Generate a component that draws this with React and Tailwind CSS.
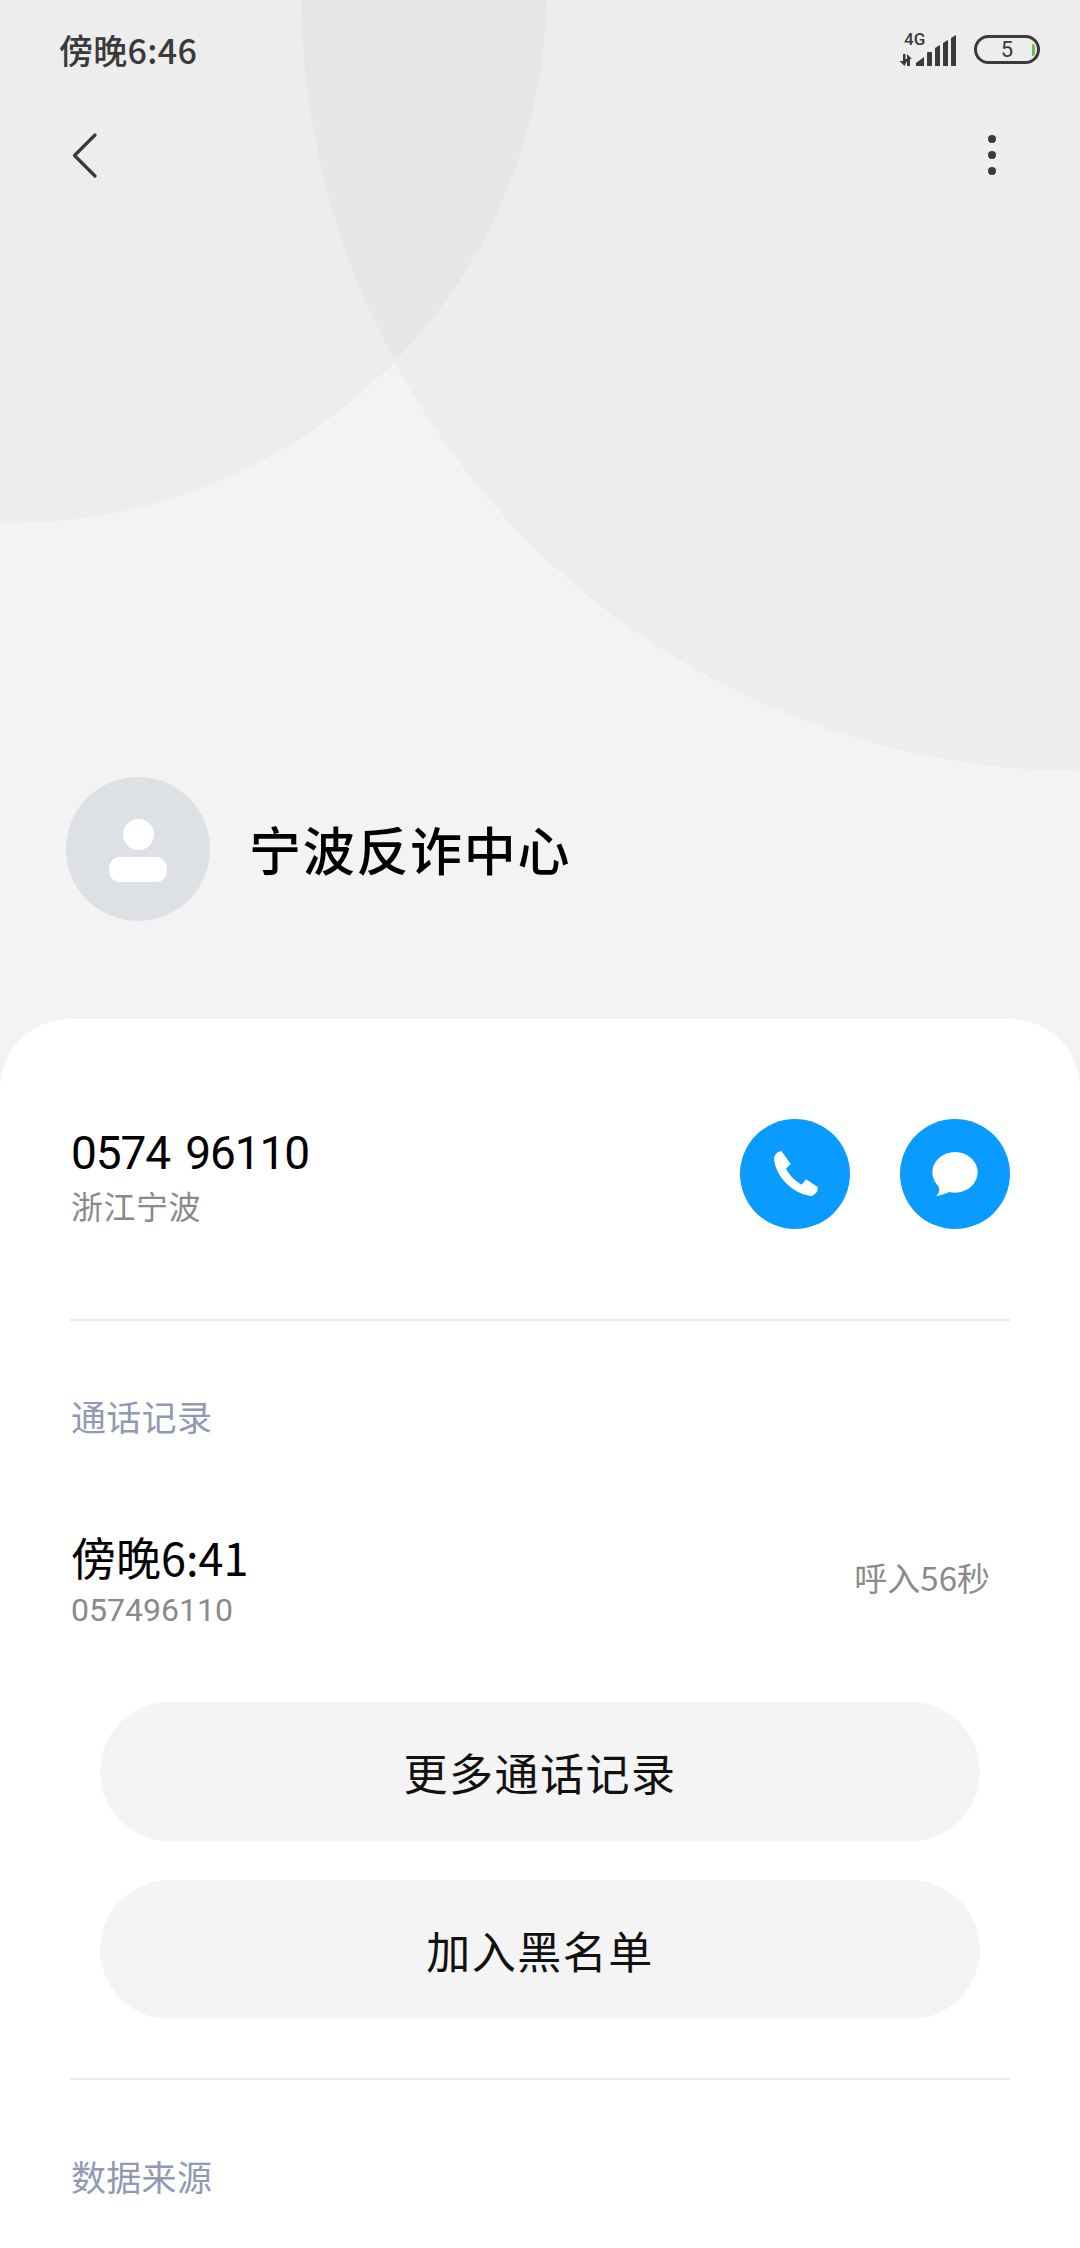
const cjk = { fontFamily: '"Noto Sans CJK SC", sans-serif' }
const roboto = { fontFamily: 'Roboto, sans-serif' }

function SignalIcon() {
  return (
    <svg width="58" height="32" viewBox="0 0 58 32" fill="#3a3a3a">
      {/* arrows */}
      <path d="M4 19h2.5v5H9l-3.5 7-5-5H4z" />
      <path d="M8 31v-12l5 5h-2v7z" />
      {/* bars */}
      <path d="M17 31v-3l8-6v9z" />
      <rect x="28" y="17" width="5" height="14" rx="1" />
      <path d="M36 13l5-3v21h-5z" />
      <path d="M44 8l5-3v26h-5z" />
      <path d="M52 3l5-3v31h-5z" />
    </svg>
  )
}

function BackIcon() {
  return (
    <svg width="26" height="45" viewBox="0 0 26 45" fill="none" stroke="#3a3a3a" strokeWidth="3.2" strokeLinecap="round" strokeLinejoin="round">
      <path d="M23 2L2.5 22.5L23 43" />
    </svg>
  )
}

function PhoneIcon() {
  return (
    <svg width="110" height="110" viewBox="120 87 330 330" fill="#fff">
      <path d="M222 205C224 192 235 183 245 184L272 222C265 228 262 232 258 236C270 258 285 272 305 284L318 268L352 290C358 298 345 318 332 318C280 312 225 260 222 205Z" />
    </svg>
  )
}

function MessageIcon() {
  return (
    <svg width="110" height="110" viewBox="600 87 330 330" fill="#fff">
      <ellipse cx="765" cy="247" rx="68" ry="61" />
      <path d="M715 285L718 302C716 310 712 315 708 318C725 316 740 310 755 303Z" />
    </svg>
  )
}

function Divider() {
  return <div className="h-[2px] bg-[#ececec]" />
}

function ActionButton({ label }) {
  return (
    <button className="mx-[30px] h-[139px] rounded-full bg-[#f4f4f4] text-[#111] text-[44px] leading-none tracking-[1.5px]">
      {label}
    </button>
  )
}

export default function App() {
  return (
    <div className="relative w-[1080px] h-[2248px] overflow-hidden bg-[#f3f3f3] flex flex-col" style={cjk}>
      {/* background circles */}
      <div className="absolute left-[-523px] top-[-547px] w-[1070px] h-[1070px] rounded-full bg-black/[0.022]" />
      <div className="absolute left-[301px] top-[-787px] w-[1558px] h-[1558px] rounded-full bg-black/[0.022]" />

      <div className="relative pt-[34px] pl-[59px] pr-[40px] h-[120px] flex justify-between items-start">
        <span className="text-[34px] leading-[32px] tracking-[0.3px] font-medium text-[#3a3a3a]">傍晚6:46</span>
        <div className="flex items-start gap-[17px] pt-[1px]">
          <div className="relative w-[58px] h-[30px]">
            <span className="absolute left-[5px] top-[-4px] text-[17px] leading-[17px] font-medium text-[#3a3a3a]" style={roboto}>4G</span>
            <div className="absolute left-0 top-0"><SignalIcon /></div>
          </div>
          <div className="relative w-[66px] h-[29px] rounded-full border-[3px] border-[#3a3a3a] flex items-center justify-center">
            <span className="text-[22px] leading-none text-[#3a3a3a]" style={roboto}>5</span>
            <div className="absolute right-[2px] top-[6px] w-[3px] h-[12px] bg-[#6cc04a] rounded-r-full" />
          </div>
        </div>
      </div>

      <div className="relative h-[70px] pl-[72px] pr-[84px] flex items-center justify-between">
        <BackIcon />
        <div className="flex flex-col gap-[8px]">
          <div className="w-[8px] h-[8px] rounded-full bg-[#3a3a3a]" />
          <div className="w-[8px] h-[8px] rounded-full bg-[#3a3a3a]" />
          <div className="w-[8px] h-[8px] rounded-full bg-[#3a3a3a]" />
        </div>
      </div>

      <div className="relative mt-[587px] pl-[66px] flex items-center gap-[39px]">
        <div className="w-[144px] h-[144px] rounded-full bg-[#dde0e4] flex flex-col items-center justify-center gap-[7px] pt-[3px]">
          <div className="w-[31px] h-[31px] rounded-full bg-white" />
          <div className="w-[58px] h-[25px] rounded-[11px] bg-white" />
        </div>
        <span className="text-[52px] leading-none font-medium tracking-[1.7px] text-black">宁波反诈中心</span>
      </div>

      <div className="relative mt-[98px] flex-1 bg-white rounded-t-[70px] px-[70px] flex flex-col">
        <div className="flex items-start justify-between h-[300px]">
          <div className="pt-[111px] pl-[1px]">
            <div className="text-[46px] leading-[46px] tracking-[-1.1px] [word-spacing:5px] text-black" style={roboto}>0574 96110</div>
            <div className="mt-[13px] text-[32px] leading-[32px] tracking-[0.5px] text-[#8a8a8a]">浙江宁波</div>
          </div>
          <div className="flex gap-[50px] pt-[100px]">
            <div className="w-[110px] h-[110px] rounded-full bg-[#0a9bff]"><PhoneIcon /></div>
            <div className="w-[110px] h-[110px] rounded-full bg-[#0a9bff]"><MessageIcon /></div>
          </div>
        </div>
        <Divider />

        <div className="mt-[77px] pl-[1px] text-[35px] leading-[35px] tracking-[0.3px] text-[#9199b5]">通话记录</div>

        <div className="mt-[101px] pl-[1px] pr-[20px] flex items-center justify-between">
          <div>
            <div className="text-[45px] leading-[45px] text-black">傍晚6:41</div>
            <div className="mt-[15px] text-[32px] leading-[32px] text-[#8a8a8a]" style={roboto}>057496110</div>
          </div>
          <div className="pb-[6px] text-[33px] leading-[32px] text-[#8a8a8a]">呼入56秒</div>
        </div>

        <div className="mt-[76px] flex flex-col gap-[39px]">
          <ActionButton label="更多通话记录" />
          <ActionButton label="加入黑名单" />
        </div>

        <div className="mt-[59px]"><Divider /></div>
        <div className="mt-[78px] pl-[1px] text-[35px] leading-[35px] tracking-[0.3px] text-[#9199b5]">数据来源</div>
      </div>
    </div>
  )
}
